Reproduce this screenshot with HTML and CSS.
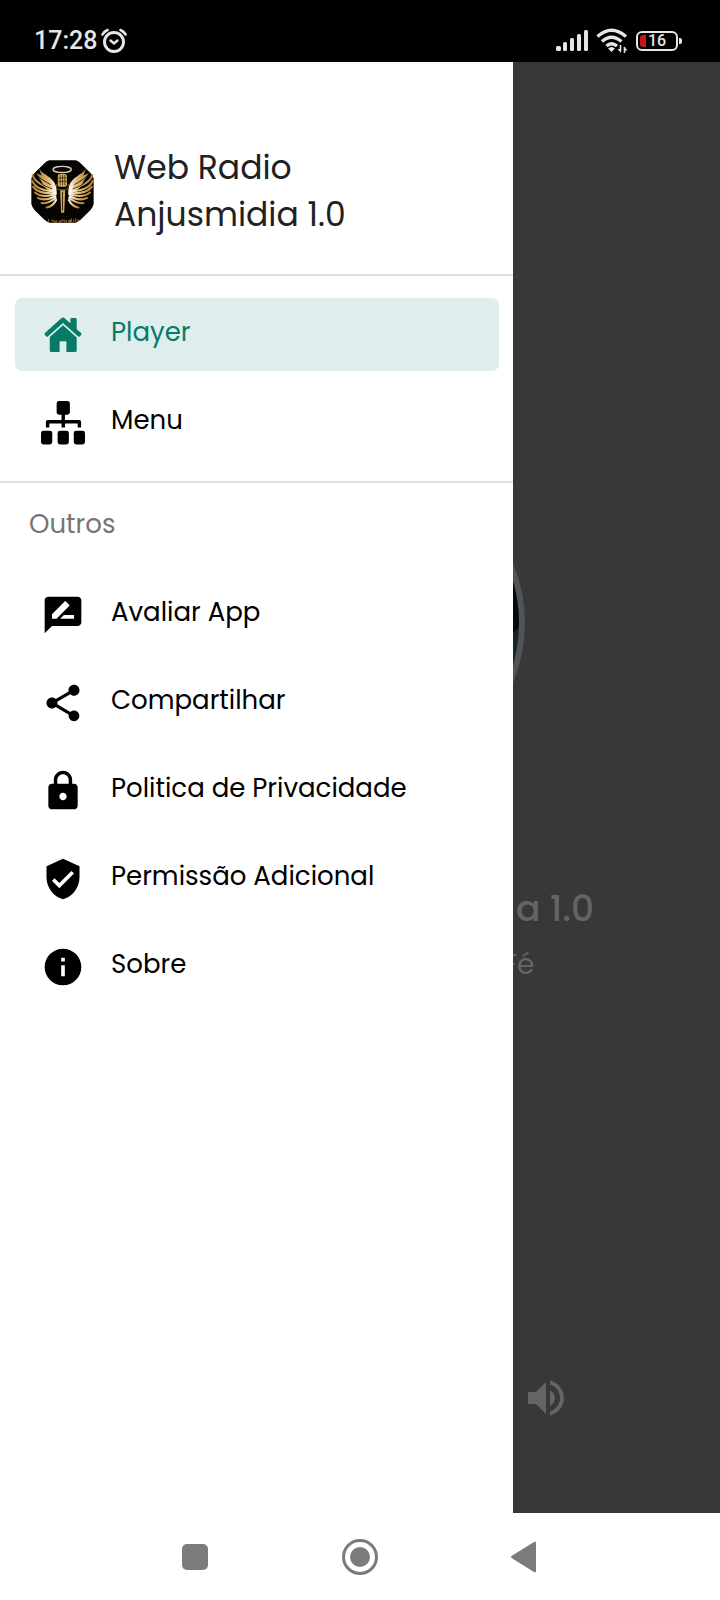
FILE: index.html
```
<!DOCTYPE html>
<html lang="pt-BR">
<head>
<meta charset="utf-8">
<meta name="viewport" content="width=device-width, initial-scale=1">
<title>Web Radio Anjusmidia 1.0</title>
<link rel="stylesheet" href="styles.css">
</head>
<body>
<header class="status-bar">
  <div class="status-left">
    <span class="clock">17:28</span>
    <svg class="alarm" viewBox="0 0 26 26" fill="none" stroke="#e6e6e6" stroke-width="3" stroke-linecap="round">
      <circle cx="13" cy="14" r="9.5"/>
      <path d="M9.500 12.500l3.500 3 3.500-3" stroke-width="2.4"/>
      <path d="M1.5 6.5Q3 3.500 6.500 2M24.500 6.500Q23 3.500 19.500 2" stroke-width="2.6"/>
    </svg>
  </div>
  <div class="status-right">
    <svg class="signal" viewBox="0 0 32 22" fill="#e6e6e6">
      <rect x="0" y="16" width="5" height="5" rx="1.500"/>
      <rect x="7" y="12" width="4" height="9" rx="1.500"/>
      <rect x="14" y="8" width="4" height="13" rx="1.500"/>
      <rect x="21" y="4" width="4" height="17" rx="1.500"/>
      <rect x="28" y="0" width="4" height="21" rx="1.500"/>
    </svg>
    <svg class="wifi" viewBox="0 0 32 26" fill="none" stroke="#e6e6e6" stroke-width="3.400">
      <path d="M1.500 8.500Q15.500 -4 30 8.500"/>
      <path d="M6 13.500Q15.500 5 25.500 13.500"/>
      <path d="M10.500 18Q15.500 13.500 21 18"/>
      <path d="M12 20.500Q15.500 17.500 19 20.500L15.500 24z" fill="#e6e6e6" stroke="none"/>
      <path d="M24.500 17v6M28.500 19v6" stroke-width="1.600"/>
      <path d="M21.500 21h3.500v4zM28 18.500v4h3.500z" fill="#e6e6e6" stroke="none"/>
    </svg>
    <div class="battery"><span class="battery-level"></span><span class="battery-text">16</span></div>
  </div>
</header>

<main class="screen">
  <aside class="drawer">
    <div class="drawer-header">
      <svg class="logo" viewBox="0 0 186 186">
        <defs>
          <linearGradient id="gold" x1="0" y1="0" x2="1" y2="0">
            <stop offset="0" stop-color="#b0803a"/>
            <stop offset=".6" stop-color="#e0bd78"/>
            <stop offset="1" stop-color="#fff8e8"/>
          </linearGradient>
          <g id="wing">
            <path d="M14 36C22 46 44 46 62 59C72 67 77 82 76 104C64 94 48 92 37 75C32 64 22 49 14 36z" fill="url(#gold)"/>
            <path d="M24 24C30 40 54 44 68 66L72 90Q56 70 38 56Q28 44 24 24z" fill="url(#gold)"/>
            <g fill="none" stroke="url(#gold)" stroke-width="6" stroke-linecap="round">
              <path d="M5 45C10 62 30 76 66 85"/>
              <path d="M3 61C10 78 32 91 68 93"/>
              <path d="M6 79C18 94 40 100 70 98"/>
              <path d="M12 96C24 107 48 108 71 102"/>
              <path d="M20 112C34 119 54 116 72 107"/>
              <path d="M31 127C44 129 60 122 73 112"/>
              <path d="M46 140C57 139 68 130 74 118"/>
            </g>
            <path d="M18 44C28 57 42 63 58 73M27 67C37 77 50 80 63 85" fill="none" stroke="#17110a" stroke-width="2.500"/>
          </g>
        </defs>
        <path d="M54 1H132Q141 4 148 11L175 38Q183 46 185 55V130Q183 140 175 148L148 175Q141 182 132 185H54Q45 182 38 175L11 148Q3 140 1 130V55Q3 46 11 38L38 11Q45 4 54 1z" fill="#050403"/>
        <use href="#wing"/>
        <use href="#wing" transform="matrix(-1 0 0 1 186 0)"/>
        <ellipse cx="92" cy="28" rx="27" ry="9" fill="none" stroke="#d9d4ca" stroke-width="4"/>
        <rect x="79" y="41" width="27" height="38" rx="6" fill="#d6ae58"/>
        <path d="M86 44v31M93 44v31M100 44v31M80 53h25M80 63h25" stroke="#221609" stroke-width="2"/>
        <path d="M76 71v11q0 6 17 6t17-6V71" fill="none" stroke="#69512c" stroke-width="3"/>
        <path d="M86 89h15l-3 67h-9z" fill="#d7a64c"/>
        <path d="M93 94v55" stroke="#3d2508" stroke-width="3"/>
        <path d="M52 175v7M60 178h5v4M70 178v5h5v-5M81 182h5v-4M91 183v-5h9v5M105 178v5M112 178h5v5h-5zM119 173v10M126 177v5M132 173v9M136 178h7" fill="none" stroke="#9d741f" stroke-width="3"/>
      </svg>
      <h1 class="app-name">Web Radio Anjusmidia 1.0</h1>
    </div>

    <nav class="menu">
      <a class="menu-item active" href="#player">
        <svg class="icon" viewBox="0 0 45 45" fill="currentColor">
          <path d="M22.500 4.500Q23.500 4.500 24.500 5.500L30 10.500V6.500Q30 5 31.500 5H35Q36.500 5 36.500 6.500V16.500L41 20.500Q42 21.500 41 22.500L39.500 24Q38.800 24.600 38 24L22.500 10.200 7 24Q6.200 24.600 5.500 24L4 22.500Q3 21.500 4 20.500L20.500 5.500Q21.500 4.500 22.500 4.500z"/>
          <path d="M22.500 12.500L36.500 25V38.500Q36.500 40 35 40H26V30Q26 29 25 29H20Q19 29 19 30V40H10.500Q9 40 9 38.500V24.500z"/>
        </svg>
        <span>Player</span>
      </a>
      <a class="menu-item" href="#menu">
        <svg class="icon" viewBox="0 0 45 45" fill="currentColor">
          <rect x="16" y="0" width="13.500" height="14" rx="2.500"/>
          <path d="M21 13h3.500v6.500H39q2 0 2 2V27h-3.500v-4h-13v4H21v-4H8.500v4H5v-5.500q0-2 2-2h14z"/>
          <rect x="0" y="30.500" width="11.500" height="14" rx="2.500"/>
          <rect x="17" y="30.500" width="11.500" height="14" rx="2.500"/>
          <rect x="33.500" y="30.500" width="11.500" height="14" rx="2.500"/>
        </svg>
        <span>Menu</span>
      </a>
    </nav>

    <h2 class="section-title">Outros</h2>
    <nav class="menu others">
      <a class="menu-item" href="#avaliar">
        <svg class="icon" viewBox="0 0 24 24" fill="currentColor"><path d="M20 2H4c-1.100 0-2 .9-2 2v18l4-4h14c1.100 0 2-.9 2-2V4c0-1.100-.9-2-2-2zM6 14v-2.470l6.880-6.880c.2-.2.510-.2.710 0l1.770 1.770c.2.2.2.510 0 .710L8.470 14H6zm12 0h-7.500l2-2H18v2z"/></svg>
        <span>Avaliar App</span>
      </a>
      <a class="menu-item" href="#compartilhar">
        <svg class="icon" viewBox="0 0 24 24" fill="currentColor"><path d="M18 16.080c-.76 0-1.440.3-1.960.77L8.910 12.700c.05-.23.09-.46.09-.7s-.04-.47-.09-.7l7.050-4.110c.54.5 1.250.81 2.040.81 1.660 0 3-1.340 3-3s-1.340-3-3-3-3 1.340-3 3c0 .24.04.47.09.7L8.040 9.810C7.500 9.310 6.790 9 6 9c-1.660 0-3 1.340-3 3s1.340 3 3 3c.79 0 1.500-.31 2.040-.81l7.120 4.160c-.05.21-.08.43-.08.65 0 1.610 1.310 2.920 2.920 2.920s2.920-1.310 2.920-2.920-1.310-2.920-2.920-2.920z"/></svg>
        <span>Compartilhar</span>
      </a>
      <a class="menu-item" href="#privacidade">
        <svg class="icon" viewBox="0 0 24 24" fill="currentColor"><path d="M18 8h-1V6c0-2.760-2.240-5-5-5S7 3.240 7 6v2H6c-1.100 0-2 .9-2 2v10c0 1.100.9 2 2 2h12c1.100 0 2-.9 2-2V10c0-1.100-.9-2-2-2zm-6 9c-1.100 0-2-.9-2-2s.9-2 2-2 2 .9 2 2-.9 2-2 2zm3.100-9H8.900V6c0-1.710 1.390-3.100 3.100-3.100 1.710 0 3.100 1.390 3.100 3.100v2z"/></svg>
        <span>Politica de Privacidade</span>
      </a>
      <a class="menu-item" href="#permissao">
        <svg class="icon" viewBox="0 0 24 24" fill="currentColor"><path d="M12 1L3 5v6c0 5.550 3.840 10.740 9 12 5.160-1.260 9-6.450 9-12V5l-9-4zm-2 16l-4-4 1.410-1.410L10 14.170l6.590-6.590L18 9l-8 8z"/></svg>
        <span>Permissão Adicional</span>
      </a>
      <a class="menu-item" href="#sobre">
        <svg class="icon" viewBox="0 0 24 24" fill="currentColor"><path d="M12 2C6.480 2 2 6.480 2 12s4.480 10 10 10 10-4.480 10-10S17.520 2 12 2zm1 15h-2v-6h2v6zm0-8h-2V7h2v2z"/></svg>
        <span>Sobre</span>
      </a>
    </nav>
  </aside>

  <section class="player">
    <svg class="cover" viewBox="153 -64 14 128">
      <circle cx="8" cy="0" r="154" fill="#020a0c"/>
      <path d="M153 10L159 5V30L153 50z" fill="#182528"/>
      <circle cx="8" cy="0" r="154" fill="none" stroke="#515456" stroke-width="6"/>
    </svg>
    <p class="station">a 1.0</p>
    <p class="track">Fé</p>
    <button class="volume" type="button" aria-label="Volume">
      <svg viewBox="0 0 24 24" fill="currentColor"><path d="M3 9v6h4l5 5V4L7 9H3zm13.500 3c0-1.770-1.020-3.290-2.500-4.030v8.050c1.480-.73 2.500-2.250 2.500-4.020zM14 3.230v2.060c2.890.86 5 3.540 5 6.710s-2.110 5.850-5 6.710v2.060c4.010-.91 7-4.490 7-8.770s-2.990-7.860-7-8.770z"/></svg>
    </button>
  </section>
</main>

<footer class="nav-bar">
  <button type="button" aria-label="Recentes"><svg viewBox="0 0 38 38" fill="#7b7b7b"><rect x="6" y="6" width="26" height="26" rx="5"/></svg></button>
  <button type="button" aria-label="Início"><svg viewBox="0 0 38 38" fill="#7b7b7b"><circle cx="19" cy="19" r="10"/><circle cx="19" cy="19" r="16.500" fill="none" stroke="#7b7b7b" stroke-width="3"/></svg></button>
  <button type="button" aria-label="Voltar"><svg viewBox="0 0 38 38" fill="#7b7b7b"><path d="M5.500 18Q4.500 19 5.500 20L28 34Q30 35 30 33V5Q30 3 28 4z"/></svg></button>
</footer>
</body>
</html>
```

FILE: styles.css
```
* {box-sizing: border-box;}
body {margin: 0;min-height: 100vh;display: flex;flex-direction: column;background: #fff;color: #000;font-family: Poppins, Inter, sans-serif;}
h1, h2, p {margin: 0;font-weight: 400;}
svg {display: block;}
button {padding: 0;border: 0;background: none;cursor: pointer;}

/* status bar */
.status-bar {display: flex;justify-content: space-between;padding: 20px 38px 0 34px;height: 62px;background: #000;color: #e6e6e6;font-family: Roboto, sans-serif;}
.status-left, .status-right {display: flex;align-items: center;height: 42px;}
.status-left {gap: 4px;}
.status-right {gap: 8px;}
.clock {font-size: 25px;line-height: 42px;font-weight: 500;}
.alarm {width: 26px;height: 26px;}
.signal {width: 32px;height: 22px;}
.wifi {width: 32px;height: 26px;}
.battery {position: relative;display: flex;align-items: center;justify-content: center;width: 42px;height: 20px;margin-right: 4px;border: 2px solid #e6e6e6;border-radius: 6px;}
.battery::after {content: "";position: absolute;right: -6px;top: 5px;width: 3px;height: 6px;border-radius: 0 2px 2px 0;background: #e6e6e6;}
.battery-level {position: absolute;left: 2px;top: 2px;width: 6px;height: 12px;border-radius: 3px 0 0 3px;background: #c4161c;}
.battery-text {font-size: 16px;line-height: 16px;font-weight: 500;}

/* drawer */
.screen {flex: 1;display: flex;}
.drawer {flex: 0 0 71.25%;background: #fff;}
.drawer-header {display: flex;align-items: center;gap: 20px;padding: 82px 31px 36px;}
.logo {flex: none;width: 63px;height: 63px;}
.app-name {max-width: 260px;font-size: 33px;line-height: 47px;color: #212121;}
.menu {display: flex;flex-direction: column;gap: 15px;padding: 22px 14px 22px 15px;border-top: 2px solid #e0e0e0;border-bottom: 2px solid #e0e0e0;}
.menu.others {padding-top: 34px;border: 0;}
.menu-item {display: flex;align-items: center;gap: 26px;height: 73px;padding: 0 26px;border-radius: 7px;color: #000;font-size: 26px;line-height: 38px;text-decoration: none;}
.menu-item span {padding-bottom: 6px;}
.menu-item.active {background: #dfeeed;color: #077a68;}
.icon {flex: none;width: 44px;height: 44px;}
.section-title {padding: 21px 29px 0;font-size: 26px;line-height: 40px;color: #757575;}

/* dimmed player behind the drawer */
.player {flex: 1;min-width: 0;padding-top: 497px;overflow: hidden;background: #383838;color: #646464;}
.cover {width: 14px;height: 128px;}
.station {margin-top: 198px;padding-left: 3px;font-size: 36px;line-height: 48px;font-weight: 500;white-space: nowrap;}
.track {margin: 14px 0 0 -10px;font-size: 28px;line-height: 36px;}
.volume {display: block;margin: 391px 0 0 9px;color: #646464;}
.volume svg {width: 48px;height: 48px;}

/* system navigation */
.nav-bar {display: flex;justify-content: center;align-items: center;gap: 127px;height: 87px;background: #fff;}
.nav-bar svg {width: 38px;height: 38px;}
```
